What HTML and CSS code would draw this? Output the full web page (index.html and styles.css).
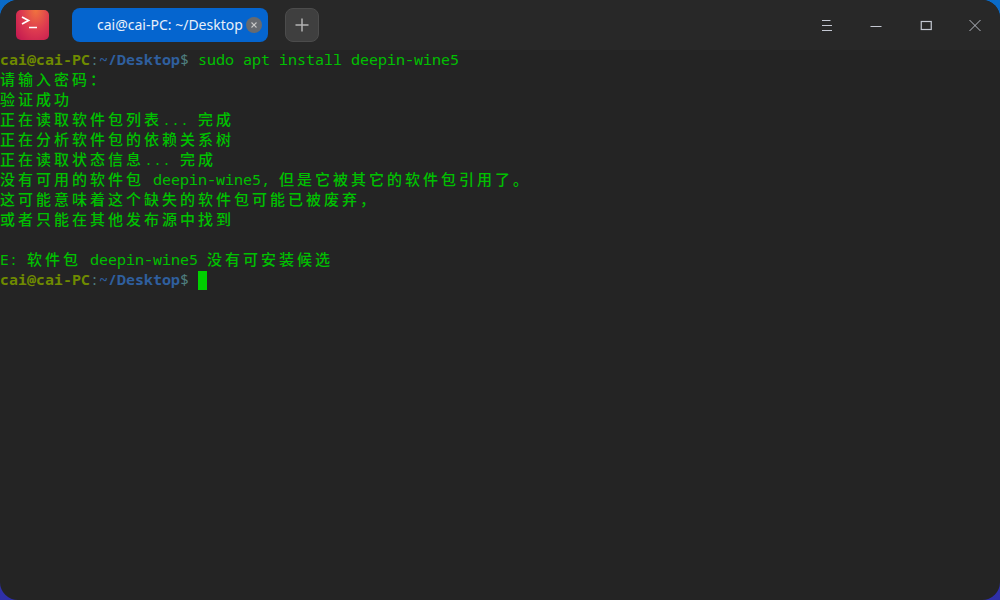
FILE: index.html
```html
<!DOCTYPE html>
<html lang="zh-CN">
<head>
<meta charset="utf-8">
<title>Terminal</title>
<link rel="stylesheet" href="styles.css">
</head>
<body>
<div class="window">
  <header class="titlebar">
    <div class="logo">
      <svg width="20" height="16" viewBox="0 0 20 16"><path d="M1 2 L7.500 5.500 L1 9" fill="none" stroke="#fff" stroke-width="1.7"/><path d="M8 12.500 H16" stroke="#fff" stroke-width="1.500"/></svg>
    </div>
    <div class="tab">
      <span class="tab-title">cai@cai-PC: ~/Desktop</span>
      <span class="tab-close"><svg width="8" height="8" viewBox="0 0 8 8"><path d="M1.500 1.500 L6.500 6.500 M6.500 1.500 L1.500 6.500" stroke="#c8c8c8" stroke-width="1.100"/></svg></span>
    </div>
    <div class="add">
      <svg width="14" height="14" viewBox="0 0 14 14"><path d="M7 0.500 V13.500 M0.500 7 H13.500" stroke="#b4b4b4" stroke-width="1.500"/></svg>
    </div>
    <div class="controls">
      <span class="ctl"><svg width="12" height="14" viewBox="0 0 12 14"><path d="M1 2.500 H9.500 M1 7.500 H11 M1 12.500 H11" stroke="#c4c8d2" stroke-width="1"/></svg></span>
      <span class="ctl"><svg width="12" height="12" viewBox="0 0 12 12"><path d="M0.500 7.500 H11.500" stroke="#c4c8d2" stroke-width="1.100"/></svg></span>
      <span class="ctl"><svg width="12" height="12" viewBox="0 0 12 12"><rect x="1.250" y="2.500" width="10" height="8" fill="none" stroke="#c4c8d2" stroke-width="1.200"/></svg></span>
      <span class="ctl"><svg width="12" height="12" viewBox="0 0 12 12"><path d="M0.500 1 L11.500 12 M11.500 1 L0.500 12" stroke="#c4c8d2" stroke-width="0.900"/></svg></span>
    </div>
  </header>
  <main class="term">
    <div class="line"><b class="host">cai@cai-PC</b><span class="colon">:</span><b class="path">~/Desktop</b><span class="colon">$</span> sudo apt install deepin-wine5</div>
    <div class="line"><span class="cjk">请输入密码：</span></div>
    <div class="line"><span class="cjk">验证成功</span></div>
    <div class="line"><span class="cjk">正在读取软件包列表</span>... <span class="cjk">完成</span></div>
    <div class="line"><span class="cjk">正在分析软件包的依赖关系树</span></div>
    <div class="line"><span class="cjk">正在读取状态信息</span>... <span class="cjk">完成</span></div>
    <div class="line"><span class="cjk">没有可用的软件包</span> deepin-wine5, <span class="cjk">但是它被其它的软件包引用了。</span></div>
    <div class="line"><span class="cjk">这可能意味着这个缺失的软件包可能已被废弃，</span></div>
    <div class="line"><span class="cjk">或者只能在其他发布源中找到</span></div>
    <div class="line"></div>
    <div class="line">E: <span class="cjk">软件包</span> deepin-wine5 <span class="cjk">没有可安装候选</span></div>
    <div class="line"><b class="host">cai@cai-PC</b><span class="colon">:</span><b class="path">~/Desktop</b><span class="colon">$</span> <span class="cursor"></span></div>
  </main>
</div>
</body>
</html>
```
FILE: styles.css
```css
* { box-sizing: border-box; }
html, body { margin: 0; height: 100%; }
body {
  width: 1000px;
  height: 600px;
  overflow: hidden;
  background: linear-gradient(180deg, #0a6bc8 0%, #2a4fc0 60%, #2f2fa8 100%);
}
.window {
  width: 1000px;
  height: 600px;
  border-radius: 18px;
  overflow: hidden;
  background: #242424;
  display: flex;
  flex-direction: column;
}
.titlebar {
  height: 50px;
  flex: none;
  display: flex;
  align-items: center;
  background: #282828;
  padding-left: 16px;
}
.logo {
  width: 33px;
  height: 30px;
  border-radius: 5px;
  background: radial-gradient(ellipse at 60% 0%, #f0743e 0%, #dd3a50 50%, #bf1450 100%);
  display: flex;
  padding: 5px 0 0 5px;
}
.tab {
  width: 196px;
  height: 34px;
  margin-left: 23px;
  border-radius: 8px;
  background: #0565cf;
  display: flex;
  align-items: center;
  padding-left: 25px;
  font: 14px/34px "Noto Sans", sans-serif;
  color: #e8f0fa;
}
.tab-title { white-space: nowrap; width: 149px; }
.tab-close {
  width: 16px;
  height: 16px;
  border-radius: 50%;
  background: #666a70;
  display: flex;
  align-items: center;
  justify-content: center;
}
.add {
  width: 34px;
  height: 34px;
  margin-left: 17px;
  border-radius: 8px;
  background: #3f3f3f;
  border: 1px solid #4c4c4c;
  display: flex;
  align-items: center;
  justify-content: center;
}
.controls {
  margin-left: auto;
  display: flex;
}
.ctl {
  width: 49.500px;
  height: 50px;
  display: flex;
  align-items: center;
  justify-content: center;
}
.term {
  flex: 1;
  font-family: "Noto Sans Mono", "DejaVu Sans Mono", "Noto Sans CJK SC", monospace;
  font-size: 15px;
  line-height: 18px;
  color: #00c000;
}
.line { height: 20px; white-space: pre; }
.cjk {
  font-family: "Noto Sans CJK SC", monospace;
  font-size: 15px;
  font-weight: 500;
  letter-spacing: 3px;
  line-height: 1;
  vertical-align: 0;
}
.host { color: #6f8a00; }
.path { color: #2f5f9e; }
.colon { color: #4f7f7f; }
.cursor {
  display: inline-block;
  width: 9px;
  height: 19px;
  background: #00d000;
  vertical-align: -5px;
}
```
